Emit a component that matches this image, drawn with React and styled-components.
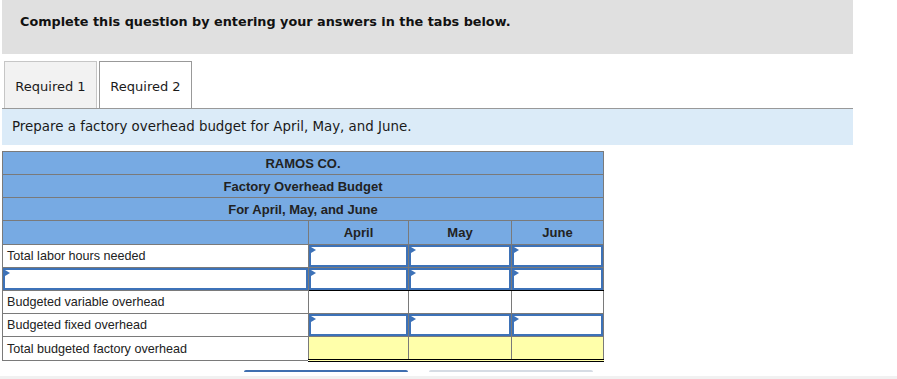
import * as React from "react";
import styled, { createGlobalStyle } from "styled-components";

const GlobalStyle = createGlobalStyle`
  html, body {
    margin: 0;
    padding: 0;
    background: #ffffff;
  }
  body {
    width: 897px;
    height: 379px;
    overflow: hidden;
    font-family: "DejaVu Sans", Verdana, sans-serif;
  }
`;

const Page = styled.div`
  display: flex;
  flex-direction: column;
  padding-left: 2px;
  width: 895px;
  height: 379px;
`;

const Instructions = styled.div`
  width: 851px;
  height: 54px;
  box-sizing: border-box;
  background: #e0e0e0;
  padding: 14px 0 0 18px;
  font-size: 12.8px;
  font-weight: bold;
  color: #111;
`;

const TabBar = styled.div`
  display: flex;
  gap: 2px;
  margin-top: 7px;
  padding-left: 2px;
  width: 849px;
  border-bottom: 1px solid #999999;
`;

const Tab = styled.div`
  height: 47px;
  box-sizing: border-box;
  width: 93px;
  display: flex;
  align-items: center;
  justify-content: center;
  font-size: 13px;
  color: #1a1a1a;
  background: ${(p) => (p.$active ? "#ffffff" : "#f2f2f2")};
  border: 1px solid ${(p) => (p.$active ? "#999999" : "#c6c6c6")};
  border-bottom: none;
  margin-bottom: ${(p) => (p.$active ? "-1px" : "0")};
  padding-top: 2px;
`;

const Prompt = styled.div`
  width: 851px;
  height: 36px;
  box-sizing: border-box;
  background: #dbebf8;
  padding: 10px 0 0 10px;
  font-size: 13.4px;
  color: #1a1a1a;
`;

const Budget = styled.table`
  margin-top: 6px;
  width: 601px;
  border-collapse: collapse;
  table-layout: fixed;
  font-family: "Liberation Sans", Arial, sans-serif;
  font-size: 13px;
  color: #222;
`;

const TitleCell = styled.td`
  height: 22px;
  padding: 0;
  background: #77aae3;
  border: 1px solid #7a7a7a;
  text-align: center;
  font-weight: bold;
  color: #222;
`;

const MonthCell = styled(TitleCell)`
  height: 23px;
`;

const Label = styled.td`
  height: 22px;
  padding: 0 0 0 4px;
  border: 1px solid #7a7a7a;
  background: #ffffff;
  white-space: nowrap;
  vertical-align: middle;
  font-size: 12.6px;
`;

const Blank = styled.td`
  height: 22px;
  padding: 0;
  border: 1px solid #7a7a7a;
  border-top: ${(p) => (p.$ruled ? "1px solid #000" : "1px solid #7a7a7a")};
  background: #ffffff;
`;

const InputCell = styled.td`
  height: 22px;
  padding: 0;
  border: 1px solid #7a7a7a;
  border-bottom: ${(p) => (p.$ruled ? "1px solid #000" : "1px solid #7a7a7a")};
  background: #ffffff;
`;

const Entry = styled.div`
  position: relative;
  height: 22px;
  box-sizing: border-box;
  border: 2px solid #3d72b8;
  background: #ffffff;

  &::before {
    content: "";
    position: absolute;
    left: 0;
    top: 0;
    border-top: 3px solid transparent;
    border-bottom: 3px solid transparent;
    border-left: 5px solid #3d72b8;
  }
`;

const TotalCell = styled.td`
  height: 22px;
  padding: 0;
  background: #ffffaa;
  border: 1px solid #7a7a7a;
  border-top: 1px solid #000;
  border-bottom: 3px double #000;
`;

const NavRow = styled.div`
  display: flex;
  margin-top: 8px;
  padding-left: 242px;
  gap: 21px;
`;

const NavButton = styled.div`
  width: 164px;
  height: 2px;
  border-radius: 2px 2px 0 0;
  background: ${(p) => (p.$primary ? "#3f6fb0" : "#d6dce4")};
`;

const Footer = styled.div`
  margin-top: 4px;
  margin-left: -2px;
  flex: 1;
  background: #f1f1f1;
`;

const months = ["April", "May", "June"];

function EntryCells({ ruled }) {
  return months.map((m) => (
    <InputCell key={m} $ruled={ruled}>
      <Entry />
    </InputCell>
  ));
}

export default function App() {
  return (
    <>
      <GlobalStyle />
      <Page>
        <Instructions>
          Complete this question by entering your answers in the tabs below.
        </Instructions>
        <TabBar>
          <Tab>Required 1</Tab>
          <Tab $active>Required 2</Tab>
        </TabBar>
        <Prompt>Prepare a factory overhead budget for April, May, and June.</Prompt>
        <Budget>
          <colgroup>
            <col style={{ width: 306 }} />
            <col style={{ width: 100 }} />
            <col style={{ width: 103 }} />
            <col style={{ width: 92 }} />
          </colgroup>
          <tbody>
            <tr>
              <TitleCell colSpan={4}>RAMOS CO.</TitleCell>
            </tr>
            <tr>
              <TitleCell colSpan={4}>Factory Overhead Budget</TitleCell>
            </tr>
            <tr>
              <TitleCell colSpan={4}>For April, May, and June</TitleCell>
            </tr>
            <tr>
              <MonthCell />
              {months.map((m) => (
                <MonthCell key={m}>{m}</MonthCell>
              ))}
            </tr>
            <tr>
              <Label>Total labor hours needed</Label>
              <EntryCells />
            </tr>
            <tr>
              <InputCell>
                <Entry />
              </InputCell>
              <EntryCells ruled />
            </tr>
            <tr>
              <Label>Budgeted variable overhead</Label>
              {months.map((m) => (
                <Blank key={m} $ruled />
              ))}
            </tr>
            <tr>
              <Label>Budgeted fixed overhead</Label>
              <EntryCells />
            </tr>
            <tr>
              <Label>Total budgeted factory overhead</Label>
              {months.map((m) => (
                <TotalCell key={m} />
              ))}
            </tr>
          </tbody>
        </Budget>
        <NavRow>
          <NavButton $primary />
          <NavButton />
        </NavRow>
        <Footer />
      </Page>
    </>
  );
}
